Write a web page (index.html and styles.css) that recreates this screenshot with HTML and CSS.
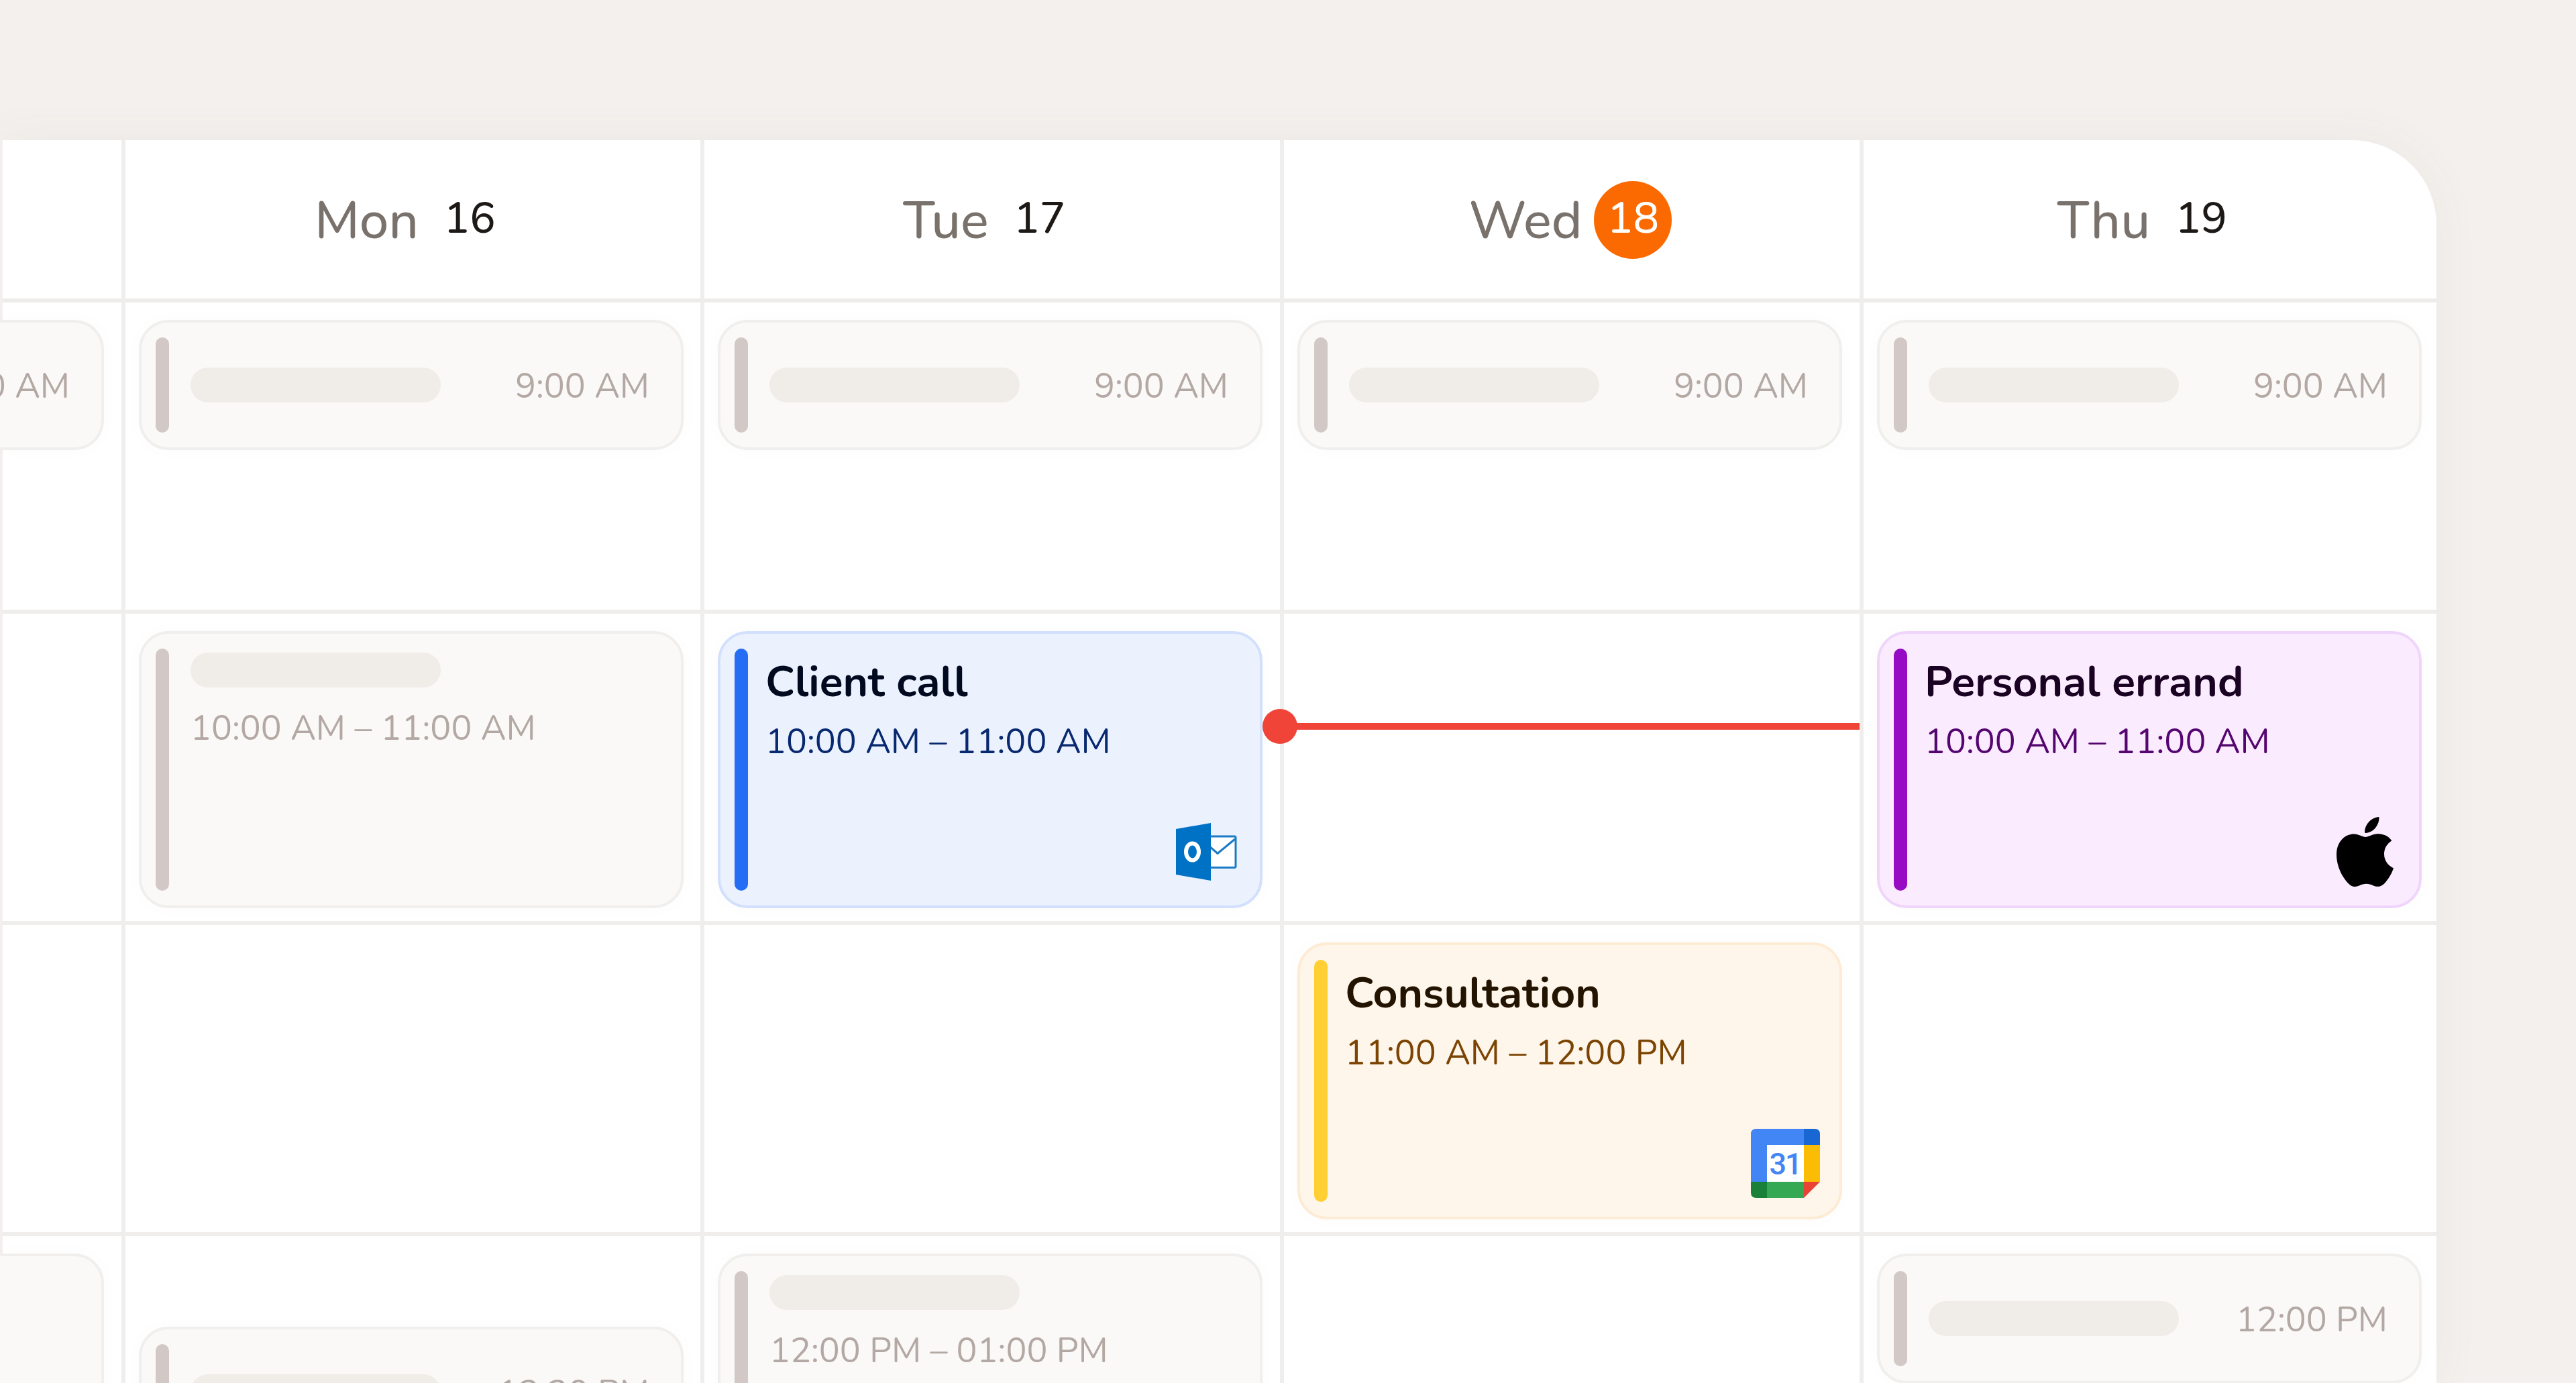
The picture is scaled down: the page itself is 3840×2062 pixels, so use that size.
FILE: index.html
```
<!DOCTYPE html>
<html lang="en">
<head>
  <meta charset="UTF-8">
  <meta name="viewport" content="width=device-width, initial-scale=1.0">
  <title>Calendar - Week</title>
  <link rel="stylesheet" href="styles.css">
</head>
<body>
  <main class="calendar">

    <!-- Previous day, cut off by the window edge -->
    <section class="day day-cut">
      <header class="day-head"></header>
      <div class="slot">
        <article class="event muted short">
          <span class="time">9:00 AM</span>
        </article>
      </div>
      <div class="slot"></div>
      <div class="slot"></div>
      <div class="slot">
        <article class="event muted"></article>
      </div>
    </section>

    <section class="day">
      <header class="day-head">
        <span class="name">Mon</span>
        <span class="num">16</span>
      </header>
      <div class="slot">
        <article class="event muted short">
          <i class="bar"></i><i class="pill"></i>
          <span class="time">9:00 AM</span>
        </article>
      </div>
      <div class="slot">
        <article class="event muted">
          <i class="bar"></i>
          <div class="info">
            <i class="pill"></i>
            <span class="time">10:00 AM – 11:00 AM</span>
          </div>
        </article>
      </div>
      <div class="slot"></div>
      <div class="slot half">
        <article class="event muted short">
          <i class="bar"></i><i class="pill"></i>
          <span class="time">12:30 PM</span>
        </article>
      </div>
    </section>

    <section class="day">
      <header class="day-head">
        <span class="name">Tue</span>
        <span class="num">17</span>
      </header>
      <div class="slot">
        <article class="event muted short">
          <i class="bar"></i><i class="pill"></i>
          <span class="time">9:00 AM</span>
        </article>
      </div>
      <div class="slot">
        <article class="event blue">
          <i class="bar"></i>
          <div class="info">
            <h3>Client call</h3>
            <span class="time">10:00 AM – 11:00 AM</span>
          </div>
          <svg class="icon outlook" viewBox="0 0 91 86">
            <rect x="40" y="20" width="49" height="46.500" rx="2" fill="#fff" stroke="#1a7ac4" stroke-width="3"/>
            <path d="M50 35 L62 45.500 L88 24" fill="none" stroke="#1a7ac4" stroke-width="3"/>
            <path d="M0 9 L52 0 V86 L0 77 Z" fill="#0072c6"/>
            <ellipse cx="24.500" cy="43" rx="9.500" ry="12.500" fill="none" stroke="#fff" stroke-width="6"/>
          </svg>
        </article>
      </div>
      <div class="slot"></div>
      <div class="slot">
        <article class="event muted">
          <i class="bar"></i>
          <div class="info">
            <i class="pill"></i>
            <span class="time">12:00 PM – 01:00 PM</span>
          </div>
        </article>
      </div>
    </section>

    <section class="day">
      <header class="day-head">
        <span class="name">Wed</span>
        <span class="num today">18</span>
      </header>
      <div class="slot">
        <article class="event muted short">
          <i class="bar"></i><i class="pill"></i>
          <span class="time">9:00 AM</span>
        </article>
      </div>
      <div class="slot">
        <div class="now"></div>
      </div>
      <div class="slot">
        <article class="event yellow">
          <i class="bar"></i>
          <div class="info">
            <h3>Consultation</h3>
            <span class="time">11:00 AM – 12:00 PM</span>
          </div>
          <svg class="icon google" viewBox="0 0 103 103">
            <path d="M0 79 V8 Q0 0 8 0 H79 V24 H24 V79 Z" fill="#4285f4"/>
            <path d="M79 0 H95 Q103 0 103 8 V24 H79 Z" fill="#1967d2"/>
            <path d="M79 24 H103 V79 H79 Z" fill="#fbbc04"/>
            <path d="M24 79 H79 V103 H24 Z" fill="#34a853"/>
            <path d="M0 79 H24 V103 H8 Q0 103 0 95 Z" fill="#188038"/>
            <path d="M79 79 H103 L79 103 Z" fill="#ea4335"/>
            <path d="M24 24 H79 V79 H24 Z" fill="#fff"/>
            <text class="cal-num" x="51" y="68" text-anchor="middle">31</text>
          </svg>
        </article>
      </div>
      <div class="slot"></div>
    </section>

    <section class="day">
      <header class="day-head">
        <span class="name">Thu</span>
        <span class="num">19</span>
      </header>
      <div class="slot">
        <article class="event muted short">
          <i class="bar"></i><i class="pill"></i>
          <span class="time">9:00 AM</span>
        </article>
      </div>
      <div class="slot">
        <article class="event purple">
          <i class="bar"></i>
          <div class="info">
            <h3>Personal errand</h3>
            <span class="time">10:00 AM – 11:00 AM</span>
          </div>
          <svg class="icon apple" viewBox="0 0 814 1000" preserveAspectRatio="none">
            <path d="M788.1 340.9c-5.8 4.500-108.200 62.200-108.200 190.500 0 148.400 130.300 200.900 134.200 202.200-.6 3.200-20.700 71.900-68.700 141.900-42.800 61.600-87.500 123.100-155.500 123.100s-85.500-39.500-164-39.500c-76.500 0-103.700 40.800-165.900 40.800s-105.600-57-155.500-127C46.700 790.700 0 663 0 541.800c0-194.400 126.400-297.500 250.800-297.500 66.100 0 121.200 43.400 162.700 43.400 39.500 0 101.100-46 176.300-46 28.500 0 130.900 2.600 198.300 99.200zm-234-181.500c31.100-36.900 53.100-88.100 53.100-139.300 0-7.100-.6-14.300-1.900-20.100-50.600 1.900-110.800 33.700-147.100 75.800-28.500 32.400-55.100 83.600-55.100 135.500 0 7.800 1.300 15.600 1.900 18.100 3.200.6 8.400 1.300 13.600 1.300 45.400 0 102.500-30.400 135.500-71.300z"/>
          </svg>
        </article>
      </div>
      <div class="slot"></div>
      <div class="slot">
        <article class="event muted short">
          <i class="bar"></i><i class="pill"></i>
          <span class="time">12:00 PM</span>
        </article>
      </div>
    </section>

  </main>
</body>
</html>
```

FILE: styles.css
```
* {
  box-sizing: border-box;
}
body {
  margin: 0;
  height: 2062px;
  padding-top: 209px;
  overflow: hidden;
  background: #f4f0ed;
  font-family: Nunito, Lato, sans-serif;
}
.calendar {
  display: grid;
  grid-template-columns: 187px 863px 864px 864px 854px;
  width: 3632px;
  height: 1853px;
  overflow: hidden;
  background: #fff;
  border-radius: 0 126px 0 0;
  box-shadow: 0 0 70px rgba(100, 100, 90, 0.06);
}
.day {
  border-right: 6px solid #efeeec;
}
.day:last-child {
  border-right: none;
}
.day-cut {
  border-left: 4px solid #f3efee;
}
.day-head {
  display: flex;
  align-items: center;
  justify-content: center;
  gap: 18px;
  height: 242px;
  padding: 2px 4px 0 0;
  border-bottom: 6px solid #edecea;
}
.name {
  padding-top: 3px;
  font-size: 78px;
  line-height: 80px;
  font-weight: 500;
  color: #79716b;
}
.num {
  width: 116px;
  height: 116px;
  border-radius: 50%;
  font-size: 64.5px;
  line-height: 113px;
  font-weight: 500;
  text-align: center;
  color: #1c1917;
}
.num.today {
  background: #fb6a00;
  color: #fff;
}
.slot {
  height: 464px;
  padding: 26px 25px 0 20px;
  border-bottom: 6px solid #efeeec;
}
.slot.half {
  padding-top: 135px;
}
.day:last-child .slot {
  padding-right: 22px;
}

/* events */
.event {
  display: flex;
  position: relative;
  width: 812px;
  height: 413px;
  padding: 22px 47px 22px 21px;
  border: 4px solid #f0efed;
  border-radius: 44px;
  box-shadow: 0 0 30px rgba(60, 50, 40, 0.02);
}
.event.short {
  height: 194px;
  align-items: center;
}
.day-cut .event {
  width: 155px;
  margin-left: -24px;
  border-left: none;
  border-radius: 0 44px 44px 0;
  justify-content: flex-end;
  padding: 22px 47px 22px 0;
  overflow: hidden;
}
.bar {
  width: 20px;
  align-self: stretch;
  border-radius: 10px;
}
.pill {
  display: block;
  width: 373px;
  height: 52px;
  border-radius: 26px;
  background: #f0ede9;
}
.short .pill {
  margin-left: 32px;
}
.short .time {
  margin-left: auto;
  padding-top: 4px;
}
.info {
  margin-left: 26px;
}
h3 {
  margin: 10px 0 0;
  font-size: 64.3px;
  line-height: 80px;
  font-weight: 700;
}
.time {
  display: block;
  font-size: 51.7px;
  line-height: 60px;
  white-space: nowrap;
}
.info .time {
  margin-top: 19px;
}
.muted {
  background: #faf9f7;
  color: #b3a8a3;
}
.muted .bar {
  background: #d2c8c5;
}
.muted .info {
  margin-left: 32px;
  padding-top: 6px;
}
.muted .info .time {
  margin-top: 31px;
}
.blue {
  background: #ebf2fe;
  border-color: #d3e0fd;
  color: #08286f;
}
.blue .bar {
  background: #266df6;
}
.blue h3 {
  color: #020a20;
}
.yellow {
  background: #fff6eb;
  border-color: #feebd3;
  color: #7b4403;
}
.yellow .bar {
  background: #ffcf33;
}
.yellow h3 {
  color: #231301;
}
.purple {
  background: #faebfe;
  border-color: #efd5fb;
  color: #54056f;
}
.purple .bar {
  background: #980bc4;
}
.purple h3 {
  color: #1a0222;
}

/* provider logo in the corner of an event */
.icon {
  position: absolute;
}
.outlook {
  width: 91px;
  height: 86px;
  right: 34px;
  bottom: 37px;
}
.google {
  width: 103px;
  height: 103px;
  right: 29px;
  bottom: 28px;
}
.apple {
  width: 85px;
  height: 104px;
  right: 38px;
  bottom: 28px;
}
.cal-num {
  font-family: Roboto, sans-serif;
  font-size: 45px;
  font-weight: 500;
  letter-spacing: -2px;
  fill: #4285f4;
}

/* current time */
.now {
  position: relative;
  width: 858px;
  height: 10px;
  margin: 137px 0 0 -20px;
  background: #f04438;
}
.now::before {
  content: "";
  position: absolute;
  left: -32px;
  top: -21px;
  width: 52px;
  height: 52px;
  border-radius: 50%;
  background: #f04438;
}
```
